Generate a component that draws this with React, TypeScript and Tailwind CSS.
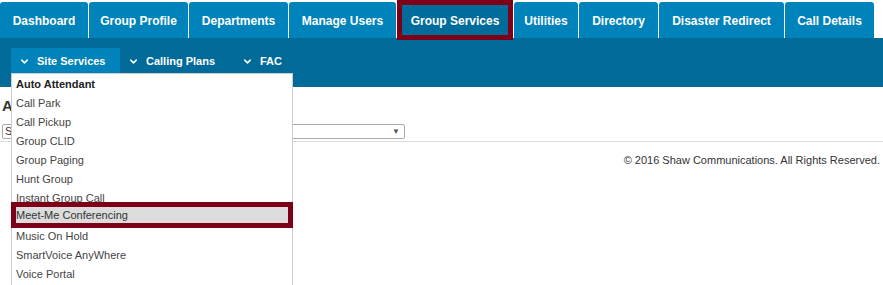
import { ChevronDown } from 'lucide-react'

const tabs = [
  { label: 'Dashboard', w: 'w-[88px]' },
  { label: 'Group Profile', w: 'w-[99px]' },
  { label: 'Departments', w: 'w-[99px]' },
  { label: 'Manage Users', w: 'w-[107px]' },
  { label: 'Group Services', w: 'w-[116px]', active: true },
  { label: 'Utilities', w: 'w-[64px]' },
  { label: 'Directory', w: 'w-[79px]' },
  { label: 'Disaster Redirect', w: 'w-[125px]' },
  { label: 'Call Details', w: 'w-[89px]' },
]

const subnav = [
  { label: 'Site Services', w: 'w-[109px]', open: true },
  { label: 'Calling Plans', w: 'w-[114px]' },
  { label: 'FAC', w: 'w-[60px]' },
]

const siteServices = [
  'Auto Attendant',
  'Call Park',
  'Call Pickup',
  'Group CLID',
  'Group Paging',
  'Hunt Group',
  'Instant Group Call',
  'Meet-Me Conferencing',
  'Music On Hold',
  'SmartVoice AnyWhere',
  'Voice Portal',
]

export default function App() {
  return (
    <div className="relative w-[883px] h-[285px] overflow-hidden bg-white font-['Liberation_Sans',Arial,sans-serif] text-[#333]">
      {/* Main tabs */}
      <nav className="flex gap-px pt-[2px] h-[38px]">
        {tabs.map((t) =>
          t.active ? (
            <div
              key={t.label}
              className={`${t.w} -mt-[2px] h-[40px] border-[5px] border-[#7d0018] bg-[#006c9c] flex items-center justify-center pt-[2px] text-[12px] font-bold text-white`}
            >
              {t.label}
            </div>
          ) : (
            <div
              key={t.label}
              className={`${t.w} h-[36px] rounded-t-[3px] bg-[#0082bb] flex items-center justify-center pt-[1px] text-[12px] font-bold text-white`}
            >
              {t.label}
            </div>
          ),
        )}
      </nav>

      {/* Sub navigation */}
      <div className="h-[49px] bg-[#006b99] px-[11px] pt-[10px] flex">
        {subnav.map((s) => (
          <div
            key={s.label}
            className={`${s.w} h-[25px] flex items-center pl-[8px] gap-[7px] pt-[1px] text-[11px] font-bold text-white ${
              s.open ? 'bg-[#0082bb]' : ''
            }`}
          >
            <ChevronDown size={11} strokeWidth={3.2} />
            <span>{s.label}</span>
          </div>
        ))}
      </div>

      {/* Page content behind the menu */}
      <div className="px-[2px] pt-[9px]">
        <h2 className="text-[15px] font-bold leading-[20px] text-[#333]">Auto Attendant</h2>
        <div className="mt-[8px] w-[403px] h-[15px] border border-[#aaa] rounded-[2px] flex items-center justify-between pl-[2px] pr-[4px] text-[11px]">
          <span>Select a Service</span>
          <span className="text-[8px] text-[#555]">▼</span>
        </div>
      </div>
      <div className="mt-[2px] border-t border-[#ddd]" />
      <p className="pr-[3px] pt-[10px] text-right text-[11px] text-[#333]">
        © 2016 Shaw Communications. All Rights Reserved.
      </p>

      {/* Site Services dropdown */}
      <ul className="absolute left-[11px] top-[73px] w-[282px] h-[213px] bg-white border border-[#ccc] pt-[1px]">
        {siteServices.map((item, i) =>
          item === 'Meet-Me Conferencing' ? (
            <li
              key={item}
              className="-mx-px h-[26px] -mt-[6px] -mb-px border-[5px] border-[#7d0018] bg-[#dcdcdc] flex items-center pt-[1px] text-[11px] text-[#333]"
            >
              {item}
            </li>
          ) : (
            <li
              key={item}
              className={`h-[19px] flex items-center pl-[4px] text-[11px] ${
                i === 0 ? 'font-bold text-[#222]' : 'text-[#444]'
              }`}
            >
              {item}
            </li>
          ),
        )}
      </ul>
    </div>
  )
}
